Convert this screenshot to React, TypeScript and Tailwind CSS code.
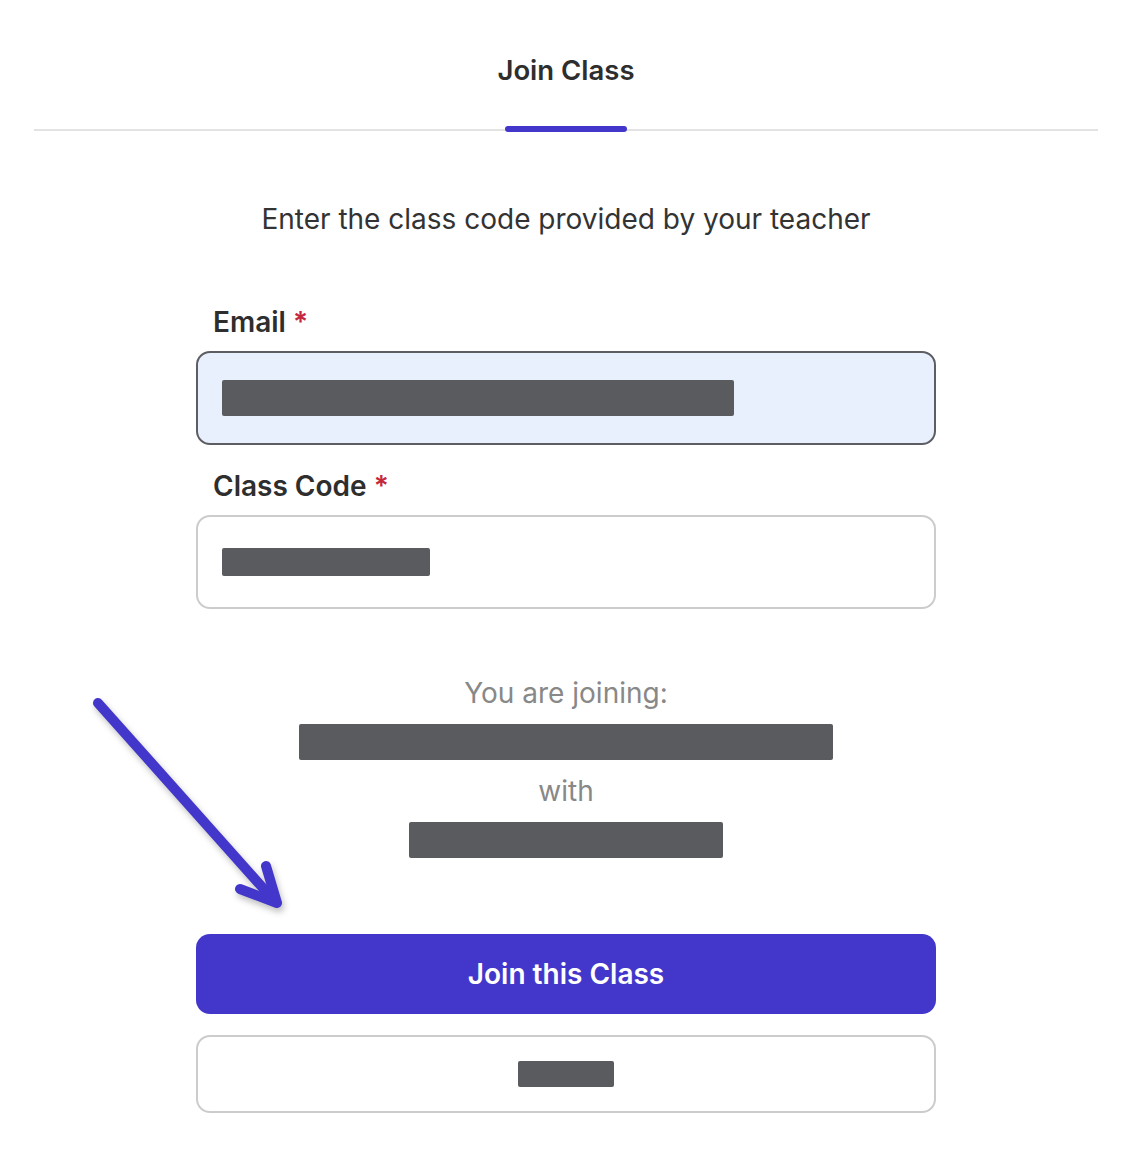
const Redacted = ({ className }: { className: string }) => (
  <div className={`bg-[#5a5b5e] rounded-[2px] ${className}`} />
);

const FieldLabel = ({ text }: { text: string }) => (
  <label className="block pl-[17px] text-[28px] leading-[32px] font-semibold text-[#2e2e2e]">
    {text} <span className="text-[#c5283d]">*</span>
  </label>
);

const PointerArrow = () => (
  <svg
    className="absolute left-[80px] top-[680px] pointer-events-none"
    width="220"
    height="240"
    viewBox="80 680 220 240"
    fill="none"
    style={{ filter: "drop-shadow(2px 4px 3px rgba(0,0,0,0.25))" }}
  >
    <line
      x1="98"
      y1="703"
      x2="271"
      y2="897"
      stroke="#4337cb"
      strokeWidth="10"
      strokeLinecap="round"
    />
    <polyline
      points="240,889 277,903 266,866"
      stroke="#4337cb"
      strokeWidth="10"
      strokeLinecap="round"
      strokeLinejoin="round"
    />
  </svg>
);

const App = () => {
  return (
    <div
      className="relative min-h-[1150px] w-full bg-white text-[#2e2e2e]"
      style={{ fontFamily: "Inter, 'Noto Sans', sans-serif" }}
    >
      {/* tab header */}
      <div className="ml-[34px] mr-[38px] border-b-2 border-[#e3e3e3] flex justify-center">
        <div className="flex flex-col items-center pt-[54px] mb-[-3px]">
          <span className="text-[27.5px] leading-[32px] font-semibold text-[#2e2e2e]">
            Join Class
          </span>
          <div className="mt-[40px] h-[6px] w-[122px] rounded-full bg-[#4337cb]" />
        </div>
      </div>

      <div className="ml-[34px] mr-[38px]">
        <div className="mx-auto w-[740px] flex flex-col">
          <p className="mt-[72px] text-center text-[28px] leading-[32px] text-[#333]">
            Enter the class code provided by your teacher
          </p>

          <div className="mt-[71px]">
            <FieldLabel text="Email" />
            <div className="mt-[13px] h-[94px] rounded-[14px] border-2 border-[#5c5e62] bg-[#e8f0fe] flex items-center pl-[24px]">
              <Redacted className="w-[512px] h-[36px]" />
            </div>
          </div>

          <div className="mt-[25px]">
            <FieldLabel text="Class Code" />
            <div className="mt-[13px] h-[94px] rounded-[14px] border-2 border-[#cccccc] bg-white flex items-center pl-[24px]">
              <Redacted className="w-[208px] h-[28px]" />
            </div>
          </div>

          <div className="mt-[68px] flex flex-col items-center text-[28px] leading-[32px] text-[#888888]">
            <span>You are joining:</span>
            <Redacted className="mt-[15px] w-[534px] h-[36px]" />
            <span className="mt-[15px]">with</span>
            <Redacted className="mt-[15px] w-[314px] h-[36px]" />
          </div>

          <button className="mt-[76px] h-[80px] w-full rounded-[14px] bg-[#4337cb] text-white text-[28px] font-semibold">
            Join this Class
          </button>

          <button className="mt-[21px] h-[78px] w-full rounded-[14px] border-2 border-[#cccccc] bg-white flex items-center justify-center">
            <Redacted className="w-[96px] h-[26px]" />
          </button>
        </div>
      </div>

      <PointerArrow />
    </div>
  );
};

export default App;
